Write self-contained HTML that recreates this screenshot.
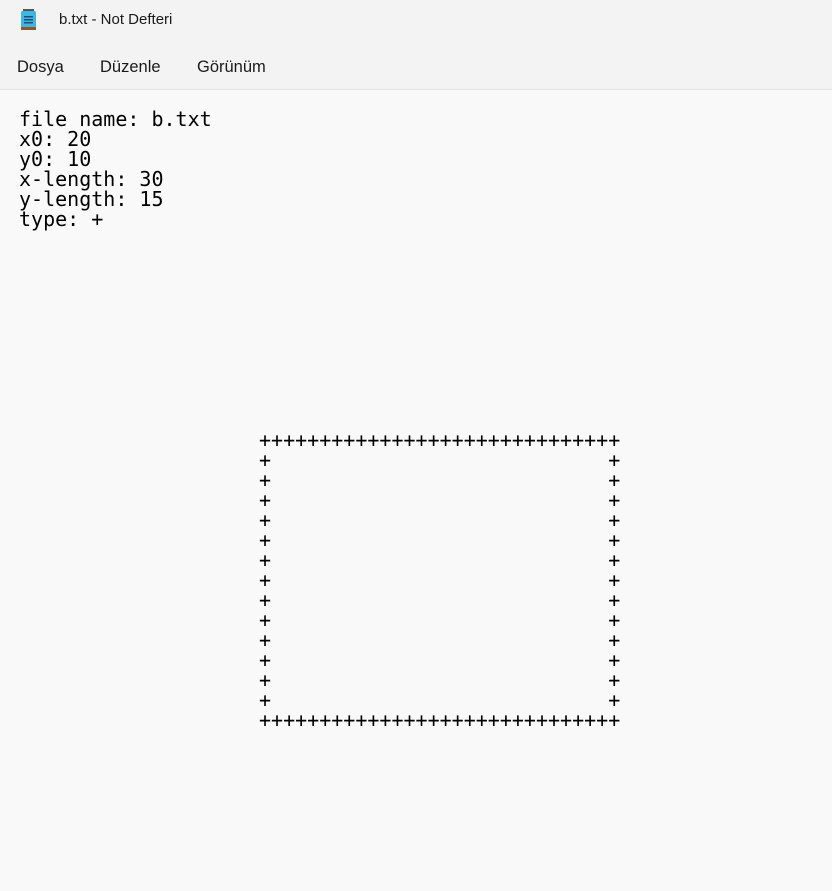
<!DOCTYPE html>
<html><head><meta charset="utf-8"><style>
body{margin:0;width:832px;height:891px;background:#f9f9f9;position:relative;overflow:hidden;font-family:"Liberation Sans",sans-serif}
.title{position:absolute;top:0;left:0;width:832px;height:42px;background:#f3f3f3}
.title span{position:absolute;left:59px;top:11px;font-size:15px;color:#1a1a1a}
.menu{position:absolute;top:42px;left:0;width:832px;height:47px;background:#f3f3f3;border-bottom:1px solid #e5e5e5}
.menu span{position:absolute;top:16px;font-size:16.5px;color:#1a1a1a}
pre{position:absolute;margin:0;font-family:"DejaVu Sans Mono","Liberation Mono",monospace;font-size:20px;line-height:20px;color:#000}
</style></head><body>
<div class="title">
<svg style="position:absolute;left:20px;top:9px" width="18" height="22" viewBox="0 0 18 22">
<rect x="1" y="2" width="15" height="18" rx="1.5" fill="#3fb6e0"/>
<rect x="1" y="18" width="15" height="3" fill="#8a5a2b"/>
<rect x="4" y="7" width="9" height="1.5" fill="#1d4f7a"/>
<rect x="4" y="10" width="9" height="1.5" fill="#1d4f7a"/>
<rect x="4" y="13" width="9" height="1.5" fill="#1d4f7a"/>
<rect x="3" y="0" width="11" height="2" fill="#555"/>
</svg>
<span>b.txt - Not Defteri</span></div>
<div class="menu"><span style="left:17px">Dosya</span><span style="left:100px">Düzenle</span><span style="left:197px">Görünüm</span></div>
<pre style="left:19px;top:109px">file name: b.txt
x0: 20
y0: 10
x-length: 30
y-length: 15
type: +</pre>
<pre style="left:259px;top:430px">++++++++++++++++++++++++++++++
+                            +
+                            +
+                            +
+                            +
+                            +
+                            +
+                            +
+                            +
+                            +
+                            +
+                            +
+                            +
+                            +
++++++++++++++++++++++++++++++</pre>
</body></html>
